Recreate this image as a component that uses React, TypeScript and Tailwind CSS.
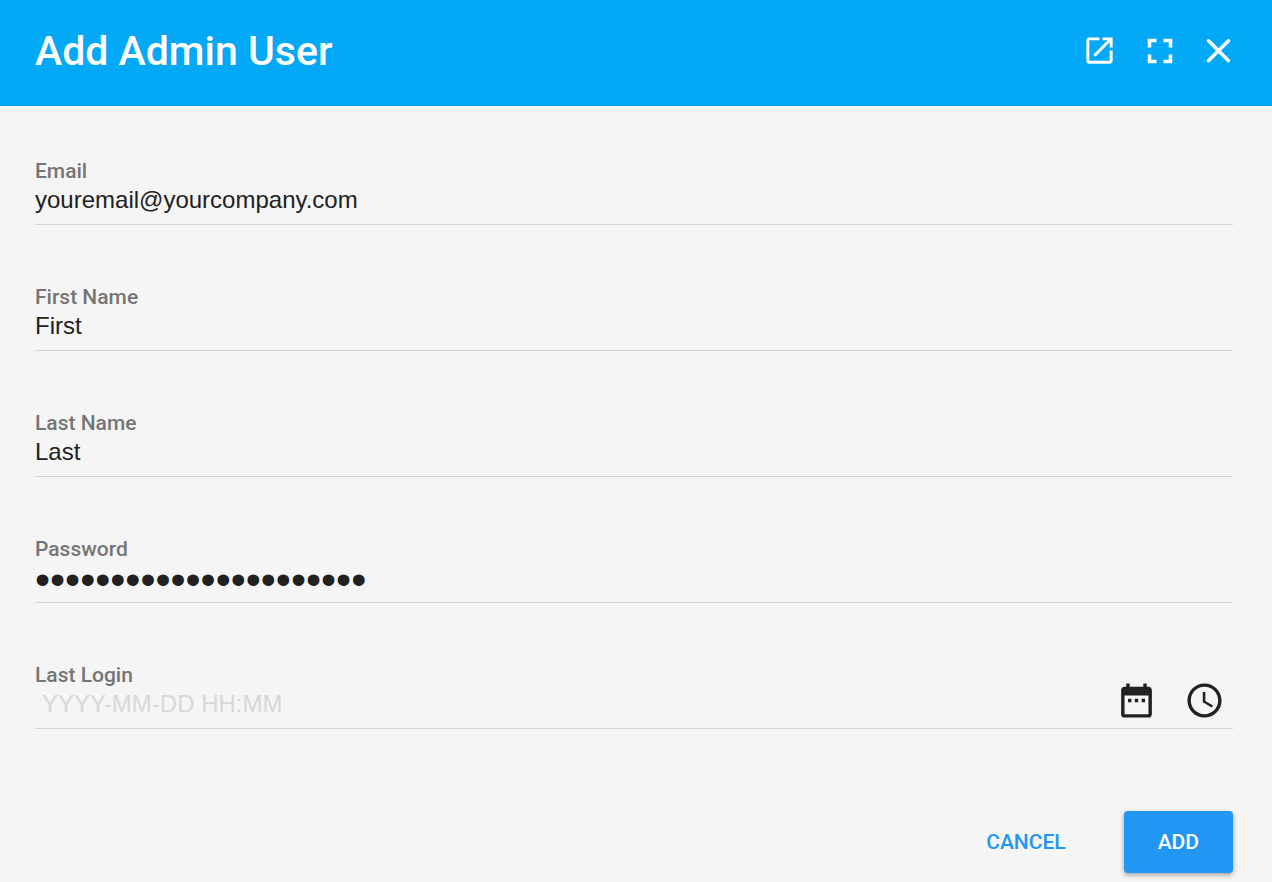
import { useState } from "react";
import type { InputHTMLAttributes, ReactNode } from "react";
import { MdAccessTime, MdDateRange, MdFullscreen, MdOpenInNew } from "react-icons/md";

type FieldProps = InputHTMLAttributes<HTMLInputElement> & {
  id: string;
  label: string;
  children?: ReactNode;
};

function Field({ id, label, children, className = "pb-2 text-2xl", ...input }: FieldProps) {
  return (
    <div className="flex items-end border-b border-[#d6d6d6]">
      <div className="flex min-w-0 flex-1 flex-col">
        <label htmlFor={id} className="text-[21px] leading-6 font-medium text-[#757575]">
          {label}
        </label>
        <input
          id={id}
          name={id}
          className={`h-[41px] w-full bg-transparent font-['Liberation_Sans',Arial,sans-serif] text-[#212121] outline-none placeholder:text-[#d8d8d8] ${className}`}
          {...input}
        />
      </div>
      {children}
    </div>
  );
}

export default function App() {
  const [values, setValues] = useState({
    email: "youremail@yourcompany.com",
    first: "First",
    last: "Last",
    password: "correcthorsebatterysta",
    login: "",
  });

  const bind = (key: keyof typeof values) => ({
    id: key,
    value: values[key],
    onChange: (e: { target: { value: string } }) =>
      setValues({ ...values, [key]: e.target.value }),
  });

  return (
    <div className="min-h-screen bg-[#f5f5f5] font-[Roboto,sans-serif]">
      <header className="flex h-[106px] items-center justify-between bg-[#03a9f7] pr-[39px] pb-1 pl-[35px] text-white">
        <h1 className="text-[41px] leading-[48px] font-medium">Add Admin User</h1>
        <div className="flex items-center gap-[22px] pb-px">
          <button type="button" aria-label="Open in new window">
            <MdOpenInNew size={35} />
          </button>
          <button type="button" aria-label="Fullscreen">
            <MdFullscreen size={42} />
          </button>
          <button type="button" aria-label="Close">
            <svg
              width="30"
              height="30"
              viewBox="0 0 30 30"
              fill="none"
              stroke="currentColor"
              strokeWidth="3.4"
              strokeLinecap="round"
            >
              <path d="M5.5 4.8 25.5 24.8M25.5 4.8 5.5 24.8" />
            </svg>
          </button>
        </div>
      </header>

      <form className="pt-[53px] pr-[39px] pb-2 pl-[35px]" onSubmit={(e) => e.preventDefault()}>
        <div className="flex flex-col gap-[60px]">
          <Field label="Email" type="email" {...bind("email")} />
          <Field label="First Name" type="text" {...bind("first")} />
          <Field label="Last Name" type="text" {...bind("last")} />
          <Field
            label="Password"
            type="password"
            className="pb-1 text-[43px]"
            {...bind("password")}
          />
          <Field
            label="Last Login"
            type="text"
            placeholder="YYYY-MM-DD HH:MM"
            className="pb-2 pl-[7px] text-2xl"
            {...bind("login")}
          >
            <div className="flex gap-[27px] pr-2 pb-[7px] text-[#212121]">
              <button type="button" aria-label="Pick a date">
                <MdDateRange size={41} />
              </button>
              <button type="button" aria-label="Pick a time">
                <MdAccessTime size={41} />
              </button>
            </div>
          </Field>
        </div>

        <div className="mt-[82px] flex justify-end gap-6 text-[21px] leading-8 font-medium">
          <button type="button" className="h-[62px] px-[34px] text-[#2196f3]">
            CANCEL
          </button>
          <button
            type="submit"
            className="h-[62px] rounded-[4px] bg-[#2196f3] px-[34px] text-white shadow-[0_2px_5px_rgba(0,0,0,0.35)]"
          >
            ADD
          </button>
        </div>
      </form>
    </div>
  );
}
